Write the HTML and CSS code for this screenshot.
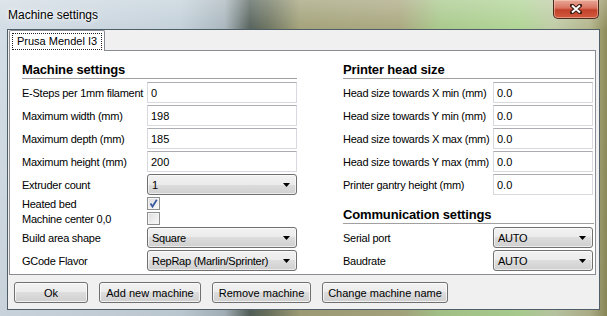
FILE: index.html
```html
<!DOCTYPE html>
<html lang="en">
<head>
    <meta charset="UTF-8">
    <title>Machine settings</title>
    <link rel="stylesheet" href="styles.css">
</head>
<body>
    <div class="window">
        <div class="titlebar">
            <span class="title">Machine settings</span>
            <button class="close" title="Close">
                <svg width="12" height="10" viewBox="0 0 12 10">
                    <path d="M2 1.5 L10 8.5 M10 1.5 L2 8.5" stroke="#3a1a12" stroke-width="4" stroke-linecap="square"/>
                    <path d="M2 1.5 L10 8.5 M10 1.5 L2 8.5" stroke="#fff" stroke-width="2"/>
                </svg>
            </button>
        </div>
        <div class="client">
            <div class="tabs">
                <div class="tab active"><span class="tab-label">Prusa Mendel I3</span></div>
            </div>
            <div class="panel">
                <div class="column left">
                    <div class="section-title">Machine settings</div>
                    <div class="row"><span class="label">E-Steps per 1mm filament</span><input class="text" value="0"></div>
                    <div class="row"><span class="label">Maximum width (mm)</span><input class="text" value="198"></div>
                    <div class="row"><span class="label">Maximum depth (mm)</span><input class="text" value="185"></div>
                    <div class="row"><span class="label">Maximum height (mm)</span><input class="text" value="200"></div>
                    <div class="row"><span class="label">Extruder count</span>
                        <div class="combo"><span>1</span><svg class="arrow" width="7" height="4" viewBox="0 0 7 4"><polygon points="0,0 7,0 3.5,4"/></svg></div>
                    </div>
                    <div class="row check"><span class="label">Heated bed</span>
                        <span class="checkbox"><svg width="11" height="11" viewBox="0 0 11 11"><path d="M2.5 5.5 L4.5 8.5 L8.8 1.8" fill="none" stroke="#3b5aa0" stroke-width="1.8"/></svg></span>
                    </div>
                    <div class="row check"><span class="label">Machine center 0,0</span><span class="checkbox"></span></div>
                    <div class="row"><span class="label">Build area shape</span>
                        <div class="combo"><span>Square</span><svg class="arrow" width="7" height="4" viewBox="0 0 7 4"><polygon points="0,0 7,0 3.5,4"/></svg></div>
                    </div>
                    <div class="row"><span class="label">GCode Flavor</span>
                        <div class="combo"><span>RepRap (Marlin/Sprinter)</span><svg class="arrow" width="7" height="4" viewBox="0 0 7 4"><polygon points="0,0 7,0 3.5,4"/></svg></div>
                    </div>
                </div>
                <div class="column right">
                    <div class="section-title">Printer head size</div>
                    <div class="row"><span class="label">Head size towards X min (mm)</span><input class="text" value="0.0"></div>
                    <div class="row"><span class="label">Head size towards Y min (mm)</span><input class="text" value="0.0"></div>
                    <div class="row"><span class="label">Head size towards X max (mm)</span><input class="text" value="0.0"></div>
                    <div class="row"><span class="label">Head size towards Y max (mm)</span><input class="text" value="0.0"></div>
                    <div class="row"><span class="label">Printer gantry height (mm)</span><input class="text" value="0.0"></div>
                    <div class="section-title second">Communication settings</div>
                    <div class="row"><span class="label">Serial port</span>
                        <div class="combo"><span>AUTO</span><svg class="arrow" width="7" height="4" viewBox="0 0 7 4"><polygon points="0,0 7,0 3.5,4"/></svg></div>
                    </div>
                    <div class="row"><span class="label">Baudrate</span>
                        <div class="combo"><span>AUTO</span><svg class="arrow" width="7" height="4" viewBox="0 0 7 4"><polygon points="0,0 7,0 3.5,4"/></svg></div>
                    </div>
                </div>
            </div>
            <div class="buttons">
                <button class="button ok">Ok</button>
                <button class="button add">Add new machine</button>
                <button class="button remove">Remove machine</button>
                <button class="button rename">Change machine name</button>
            </div>
        </div>
    </div>
</body>
</html>
```

FILE: styles.css
```css
body {
    margin: 0;
    background-color: #fff;
    font-family: 'Liberation Sans', Arial, sans-serif;
    font-size: 11px;
    letter-spacing: -0.25px;
    color: #000;
}
.window {
    width: 607px;
    height: 316px;
    box-sizing: border-box;
    padding: 0 7px 6px 7px;
    display: flex;
    flex-direction: column;
    background:
        linear-gradient(to bottom, rgba(255, 255, 255, 0.25), rgba(255, 255, 255, 0) 30px, rgba(0, 0, 0, 0.05)),
        linear-gradient(to right, #d3dde5 0, #c4d1da 180px, #a9b6bd 225px, #56625c 250px, #6d7560 268px, #a3a27a 300px, #aaa880 400px, #a9c98c 440px, #b0d495 520px, #bfcba6 555px, #b3b58c 590px, #8e8c5a 607px);
}
.titlebar {
    height: 29px;
    display: flex;
    justify-content: space-between;
    align-items: flex-start;
}
.title {
    font-size: 12px;
    letter-spacing: 0;
    padding: 8px 0 0 1px;
    text-shadow: 0 0 6px #fff, 0 0 3px #fff;
}
.close {
    width: 46px;
    height: 19px;
    margin-right: 1px;
    padding: 0;
    border: 1px solid #4d2a20;
    border-top: none;
    border-radius: 0 0 5px 5px;
    background: linear-gradient(to bottom, #e9a99a 0, #d8735f 45%, #c2412a 55%, #d25a3e 100%);
    box-shadow: inset 0 0 0 1px rgba(255, 220, 200, 0.45);
    display: flex;
    justify-content: center;
    align-items: center;
}
.client {
    flex: 1;
    border: 1px solid #4f5d66;
    background-color: #f0f0f0;
    padding: 0 3px 0 1px;
    display: flex;
    flex-direction: column;
}
.tabs {
    height: 20px;
    display: flex;
    position: relative;
    z-index: 1;
}
.tab {
    box-sizing: border-box;
    border: 1px solid #898c95;
    border-bottom: none;
    border-radius: 2px 2px 0 0;
    background-color: #fff;
    padding: 2px 2px 0 2px;
    margin-bottom: -1px;
    height: 21px;
}
.tab-label {
    display: block;
    border: 1px dotted #222;
    padding: 1px 4px 1px 4px;
    line-height: 13px;
    letter-spacing: 0;
}
.panel {
    height: 225px;
    box-sizing: border-box;
    border: 1px solid #898c95;
    background-color: #fff;
    padding: 11px 1px 0 12px;
    display: flex;
    gap: 46px;
}
.column {
    display: flex;
    flex-direction: column;
}
.column.left {
    width: 275px;
}
.column.right {
    width: 251px;
}
.section-title {
    font-size: 13px;
    font-weight: bold;
    letter-spacing: -0.15px;
    line-height: 16px;
    border-bottom: 1px solid #a0a0a0;
    margin-bottom: 3px;
    white-space: nowrap;
}
.section-title.second {
    margin-top: 10px;
}
.row {
    height: 21px;
    margin-bottom: 2px;
    display: flex;
    align-items: center;
}
.row.check {
    height: 13px;
}
.label {
    white-space: nowrap;
    flex: none;
}
.left .label {
    width: 125px;
}
.right .label {
    width: 150px;
}
.text {
    width: 150px;
    height: 21px;
    box-sizing: border-box;
    border: 1px solid #d8d9de;
    border-top-color: #abadb3;
    padding: 0 3px;
    font-family: inherit;
    font-size: 11px;
    letter-spacing: 0;
    color: #000;
    outline: none;
}
.right .text {
    width: 100px;
}
.combo {
    width: 150px;
    height: 21px;
    box-sizing: border-box;
    border: 1px solid #707070;
    border-radius: 3px;
    background: linear-gradient(to bottom, #f2f2f2 0, #ebebeb 50%, #dddddd 50%, #cfcfcf 100%);
    box-shadow: inset 0 0 0 1px rgba(255, 255, 255, 0.6);
    padding: 0 6px 0 4px;
    display: flex;
    justify-content: space-between;
    align-items: center;
}
.right .combo {
    width: 100px;
}
.checkbox {
    width: 13px;
    height: 13px;
    box-sizing: border-box;
    border: 1px solid #8e8f8f;
    background: linear-gradient(to bottom right, #dcdcdc, #fbfbfb);
    box-shadow: inset 0 0 0 1px #f4f4f4;
    display: flex;
}
.buttons {
    display: flex;
    gap: 11px;
    padding: 7px 0 0 5px;
}
.button {
    height: 21px;
    box-sizing: border-box;
    border: 1px solid #707070;
    border-radius: 3px;
    background: linear-gradient(to bottom, #f2f2f2 0, #ebebeb 50%, #dddddd 50%, #cfcfcf 100%);
    box-shadow: inset 0 0 0 1px rgba(255, 255, 255, 0.7);
    font-family: inherit;
    font-size: 11px;
    letter-spacing: 0;
    color: #000;
    padding: 0;
}
.button.ok {
    width: 74px;
}
.button.add {
    width: 102px;
}
.button.remove {
    width: 99px;
}
.button.rename {
    width: 126px;
}
```
